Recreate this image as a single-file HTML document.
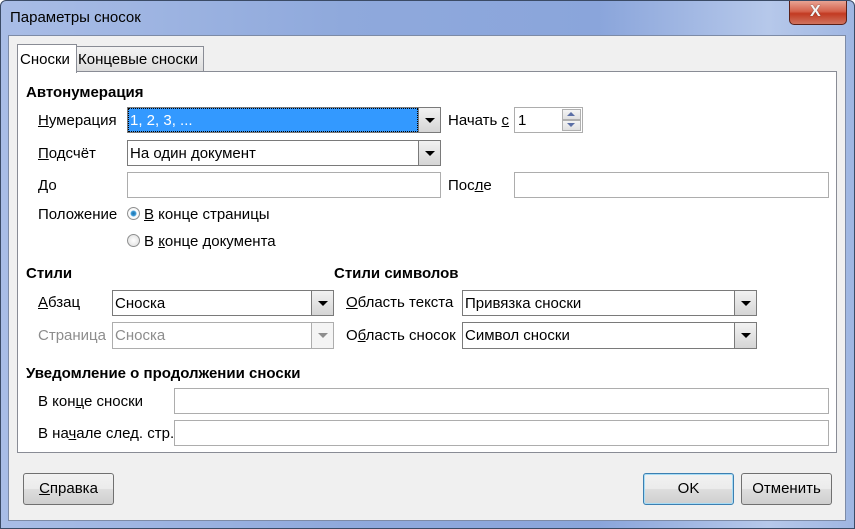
<!DOCTYPE html>
<html><head><meta charset="utf-8"><style>
*{box-sizing:border-box;margin:0;padding:0}
body{width:855px;height:529px;overflow:hidden;font-family:"Liberation Sans","DejaVu Sans",sans-serif;font-size:15px;color:#000;background:#fff}
.frame{position:absolute;left:0;top:0;width:855px;height:529px;background:linear-gradient(90deg,#a9bde6 0%,#8fa9dc 40%,#8aa5db 70%,#b6c8ea 90%,#9fb6e2 100%);border:1px solid #3b4b66;border-radius:6px 6px 0 0}
.client{position:absolute;left:8px;top:35px;width:838px;height:486px;background:#f0f0f0;border:1px solid #7d8ba6}
.a{position:absolute;white-space:nowrap}
.lbl{position:absolute;white-space:nowrap;line-height:17px}
.in{position:absolute;background:#fff;border:1px solid #adadad}
.cb{position:absolute;background:#fff;border:1px solid #7a7a7a}
.cb .t{position:absolute;left:2px;top:4px;line-height:17px}
.cb .ar{position:absolute;right:0;top:0;bottom:0;width:22px;background:linear-gradient(#f2f2f2,#d5d5d5);border-left:1px solid #7a7a7a}
.cb .ar:after{content:"";position:absolute;left:6px;top:10px;border-left:5px solid transparent;border-right:5px solid transparent;border-top:5px solid #000}
.dis{border-color:#adadad;color:#8d8d8d}
.dis .ar{background:#f4f4f4;border-left-color:#adadad}
.dis .ar:after{border-top-color:#8d8d8d}
.h{position:absolute;font-weight:bold;line-height:17px;font-size:15px}
u{text-decoration:underline}
.btn{position:absolute;height:32px;border:1px solid #707070;border-radius:3px;background:linear-gradient(#f2f2f2 0%,#ebebeb 50%,#dddddd 51%,#cfcfcf 100%);text-align:center;line-height:30px}
.radio{position:absolute;width:13px;height:13px;border-radius:50%;border:1px solid #8e8f8f;background:radial-gradient(#fff,#dcdcdc)}
</style></head><body>
<div class="frame"></div>
<div class="a" style="left:10px;top:9px;font-size:15px;line-height:18px">Параметры сносок</div>
<div class="a" style="left:789px;top:1px;width:58px;height:24px;border:1px solid #5a2018;border-top:none;border-radius:0 0 5px 5px;background:linear-gradient(#e8a393 0%,#d5624c 45%,#c23a22 55%,#d0735e 100%)"></div>
<div class="a" style="left:810px;top:3px;color:#f4f4f4;font-weight:bold;font-size:16px;line-height:18px;text-shadow:0 0 1px #333">X</div>
<div class="client"></div>
<!-- tabs -->
<div class="a" style="left:76px;top:46px;width:128px;height:26px;background:linear-gradient(#f4f4f4,#dcdcdc);border:1px solid #898c95;border-bottom:none"></div>
<div class="a" style="left:78px;top:51px;line-height:17px">Концевые сноски</div>
<div class="a" style="left:17px;top:71px;width:820px;height:382px;background:#fff;border:1px solid #898c95"></div>
<div class="a" style="left:17px;top:44px;width:60px;height:29px;background:#fff;border:1px solid #898c95;border-bottom:none"></div>
<div class="a" style="left:20px;top:51px;line-height:17px">Сноски</div>

<div class="h" style="left:26px;top:84px">Автонумерация</div>
<div class="lbl" style="left:38px;top:112px"><u>Н</u>умерация</div>
<div class="cb" style="left:127px;top:107px;width:314px;height:26px;background:#3399ff"><div class="t" style="color:#fff;outline:1px dotted #000;left:1px;top:1px;right:23px;bottom:1px;padding:3px 1px">1, 2, 3, ...</div><div class="ar"></div></div>
<div class="lbl" style="left:448px;top:112px">Начать <u>с</u></div>
<div class="in" style="left:514px;top:107px;width:69px;height:26px"><div class="a" style="left:3px;top:4px;line-height:17px">1</div>
<div class="a" style="left:47px;top:1px;width:19px;height:11px;border:1px solid #b0b0b0;background:linear-gradient(#f4f4f4,#e0e0e0)"></div>
<div class="a" style="left:47px;top:12px;width:19px;height:11px;border:1px solid #b0b0b0;background:linear-gradient(#f4f4f4,#e0e0e0)"></div>
<div class="a" style="left:52px;top:4px;border-left:4px solid transparent;border-right:4px solid transparent;border-bottom:4px solid #5b6fa6"></div>
<div class="a" style="left:52px;top:15px;border-left:4px solid transparent;border-right:4px solid transparent;border-top:4px solid #5b6fa6"></div></div>

<div class="lbl" style="left:38px;top:145px"><u>П</u>одсчёт</div>
<div class="cb" style="left:127px;top:140px;width:314px;height:26px"><div class="t">На один документ</div><div class="ar"></div></div>

<div class="lbl" style="left:38px;top:177px"><u>Д</u>о</div>
<div class="in" style="left:127px;top:172px;width:314px;height:26px"></div>
<div class="lbl" style="left:448px;top:177px">Пос<u>л</u>е</div>
<div class="in" style="left:514px;top:172px;width:315px;height:26px"></div>

<div class="lbl" style="left:38px;top:206px">Положение</div>
<div class="radio" style="left:127px;top:207px;background:radial-gradient(circle,#1d6fa5 0,#3a9ad9 30%,#fff 45%,#e6e6e6 100%)"></div>
<div class="lbl" style="left:144px;top:206px"><u>В</u> конце страницы</div>
<div class="radio" style="left:127px;top:234px"></div>
<div class="lbl" style="left:144px;top:233px">В <u>к</u>онце документа</div>

<div class="h" style="left:26px;top:265px">Стили</div>
<div class="h" style="left:334px;top:265px">Стили символов</div>
<div class="lbl" style="left:38px;top:294px"><u>А</u>бзац</div>
<div class="cb" style="left:112px;top:290px;width:222px;height:26px"><div class="t">Сноска</div><div class="ar"></div></div>
<div class="lbl" style="left:38px;top:327px;color:#8d8d8d">Страница</div>
<div class="cb dis" style="left:112px;top:322px;width:222px;height:27px"><div class="t">Сноска</div><div class="ar"></div></div>
<div class="lbl" style="left:346px;top:294px"><u>О</u>бласть текста</div>
<div class="cb" style="left:462px;top:290px;width:295px;height:26px"><div class="t">Привязка сноски</div><div class="ar"></div></div>
<div class="lbl" style="left:346px;top:327px">О<u>б</u>ласть сносок</div>
<div class="cb" style="left:462px;top:322px;width:295px;height:27px"><div class="t">Символ сноски</div><div class="ar"></div></div>

<div class="h" style="left:26px;top:365px">Уведомление о продолжении сноски</div>
<div class="lbl" style="left:38px;top:393px">В кон<u>ц</u>е сноски</div>
<div class="in" style="left:174px;top:388px;width:655px;height:26px"></div>
<div class="lbl" style="left:38px;top:425px">В на<u>ч</u>але след. стр.</div>
<div class="in" style="left:174px;top:420px;width:655px;height:26px"></div>

<div class="btn" style="left:23px;top:473px;width:91px"><u>С</u>правка</div>
<div class="btn" style="left:643px;top:473px;width:91px;border-color:#3c7fb1;box-shadow:inset 0 0 0 1px #a7dcf5">OK</div>
<div class="btn" style="left:741px;top:473px;width:91px">Отменить</div>
</body></html>
